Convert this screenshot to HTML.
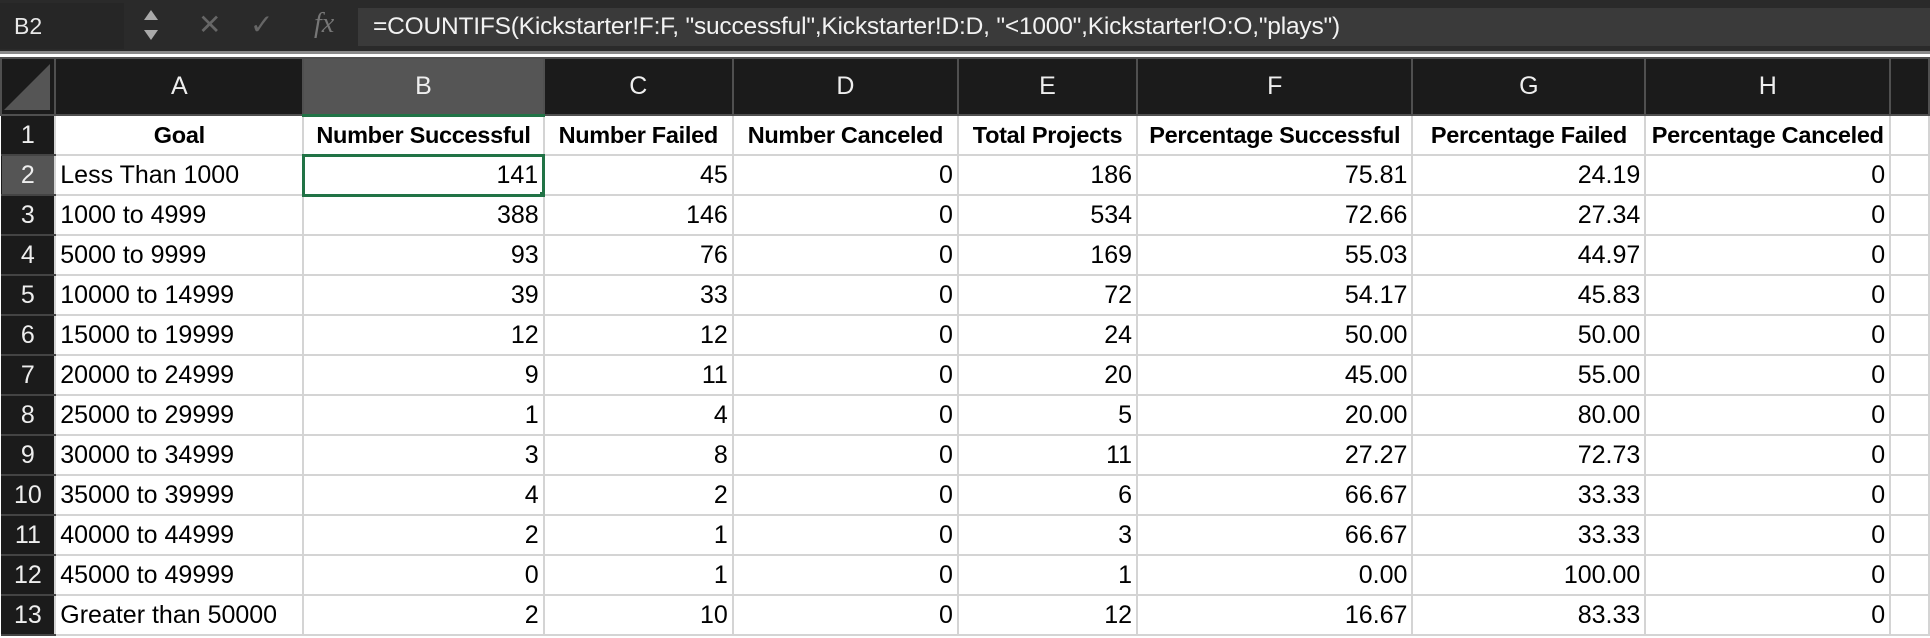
<!DOCTYPE html>
<html><head><meta charset="utf-8"><style>
*{margin:0;padding:0;box-sizing:border-box}
body{width:1930px;height:638px;overflow:hidden;background:#fff;font-family:"Liberation Sans",sans-serif;position:relative}
#fb{position:absolute;left:0;top:0;width:1930px;height:54px;background:#2a2a2a;border-bottom:3px solid #8a8a8a}
#nb{position:absolute;left:0;top:3px;width:124px;height:46px;background:#262626;color:#e8e8e8;font-size:23px;line-height:46px;padding-left:14px}
#fx{position:absolute;left:358px;top:8px;width:1572px;height:38px;background:#3a3a3a;color:#f2f2f2;font-size:24.5px;line-height:38px;padding-left:15px;white-space:nowrap;letter-spacing:-0.2px}
.ic{position:absolute;color:#666;font-size:28px;top:8px}
table{position:absolute;left:0;top:57px;border-collapse:collapse;table-layout:fixed}
td{height:40px;border:2px solid #d4d4d4;font-size:25px;padding:0 4px;text-align:right;white-space:nowrap;overflow:hidden;color:#000}
tr.h td{height:57px;background:#1b1b1b;color:#eee;text-align:center;border:2px solid #505050;font-size:25px}
td.r{background:#1b1b1b;color:#eee;text-align:center;border:1px solid #1b1b1b;border-bottom:2px solid #444;font-size:25px}
tr.t td{font-weight:bold;text-align:center;font-size:23.5px;letter-spacing:-0.3px}
tr.t td.r{font-weight:normal;font-size:25px;letter-spacing:0}
td.l{text-align:left}
</style></head><body>
<div id="fb">
<div id="nb">B2</div>
<div style="position:absolute;left:144px;top:10px;width:0;height:0;border:7px solid transparent;border-bottom:10px solid #aaa;border-top:0"></div>
<div style="position:absolute;left:144px;top:30px;width:0;height:0;border:7px solid transparent;border-top:10px solid #aaa;border-bottom:0"></div>
<div class="ic" style="left:198px">✕</div>
<div class="ic" style="left:250px">✓</div>
<div style="position:absolute;left:314px;top:8px;color:#777;font-family:'Liberation Serif',serif;font-style:italic;font-size:28px">fx</div>
<div id="fx">=COUNTIFS(Kickstarter!F:F, "successful",Kickstarter!D:D, "&lt;1000",Kickstarter!O:O,"plays")</div>
</div>
<table>
<colgroup><col style="width:55px"><col style="width:249px"><col style="width:241px"><col style="width:190px"><col style="width:226px"><col style="width:180px"><col style="width:276px"><col style="width:234px"><col style="width:245px"><col style="width:40px"></colgroup>
<tr class="h"><td style="position:relative;padding:0"><div style="position:absolute;right:4px;bottom:4px;width:0;height:0;border-left:46px solid transparent;border-bottom:46px solid #555"></div></td><td>A</td><td style="background:#555;border-bottom:3px solid #217346">B</td><td>C</td><td>D</td><td>E</td><td>F</td><td>G</td><td>H</td><td></td></tr>
<tr class="t"><td class="r">1</td><td>Goal</td><td>Number Successful</td><td>Number Failed</td><td>Number Canceled</td><td>Total Projects</td><td>Percentage Successful</td><td>Percentage Failed</td><td>Percentage Canceled</td><td></td></tr>
<tr><td class="r" style="background:#555">2</td><td class="l">Less Than 1000</td><td style="border:3px solid #217346;position:relative">141<div style="position:absolute;right:-6px;bottom:-6px;width:9px;height:9px;background:#217346;border:1px solid #fff"></div></td><td>45</td><td>0</td><td>186</td><td>75.81</td><td>24.19</td><td>0</td><td></td></tr>
<tr><td class="r">3</td><td class="l">1000 to 4999</td><td>388</td><td>146</td><td>0</td><td>534</td><td>72.66</td><td>27.34</td><td>0</td><td></td></tr>
<tr><td class="r">4</td><td class="l">5000 to 9999</td><td>93</td><td>76</td><td>0</td><td>169</td><td>55.03</td><td>44.97</td><td>0</td><td></td></tr>
<tr><td class="r">5</td><td class="l">10000 to 14999</td><td>39</td><td>33</td><td>0</td><td>72</td><td>54.17</td><td>45.83</td><td>0</td><td></td></tr>
<tr><td class="r">6</td><td class="l">15000 to 19999</td><td>12</td><td>12</td><td>0</td><td>24</td><td>50.00</td><td>50.00</td><td>0</td><td></td></tr>
<tr><td class="r">7</td><td class="l">20000 to 24999</td><td>9</td><td>11</td><td>0</td><td>20</td><td>45.00</td><td>55.00</td><td>0</td><td></td></tr>
<tr><td class="r">8</td><td class="l">25000 to 29999</td><td>1</td><td>4</td><td>0</td><td>5</td><td>20.00</td><td>80.00</td><td>0</td><td></td></tr>
<tr><td class="r">9</td><td class="l">30000 to 34999</td><td>3</td><td>8</td><td>0</td><td>11</td><td>27.27</td><td>72.73</td><td>0</td><td></td></tr>
<tr><td class="r">10</td><td class="l">35000 to 39999</td><td>4</td><td>2</td><td>0</td><td>6</td><td>66.67</td><td>33.33</td><td>0</td><td></td></tr>
<tr><td class="r">11</td><td class="l">40000 to 44999</td><td>2</td><td>1</td><td>0</td><td>3</td><td>66.67</td><td>33.33</td><td>0</td><td></td></tr>
<tr><td class="r">12</td><td class="l">45000 to 49999</td><td>0</td><td>1</td><td>0</td><td>1</td><td>0.00</td><td>100.00</td><td>0</td><td></td></tr>
<tr><td class="r">13</td><td class="l">Greater than 50000</td><td>2</td><td>10</td><td>0</td><td>12</td><td>16.67</td><td>83.33</td><td>0</td><td></td></tr>
</table>
</body></html>
